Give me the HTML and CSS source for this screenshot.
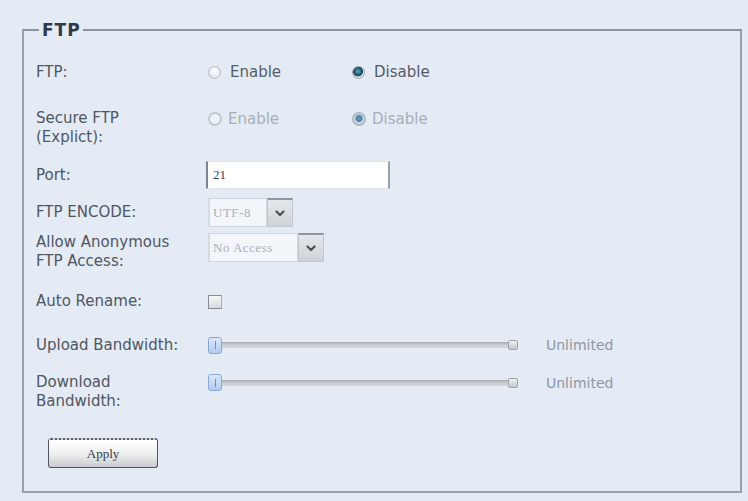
FILE: index.html
```html
<!DOCTYPE html>
<html lang="en">
<head>
<meta charset="utf-8">
<title>FTP</title>
<link rel="stylesheet" href="styles.css">
</head>
<body>
<fieldset class="panel">
  <legend class="panel-title">FTP</legend>

  <div class="row r1">
    <div class="label">FTP:</div>
    <div class="value">
      <label class="opt"><span class="radio"></span><span>Enable</span></label>
      <label class="opt"><span class="radio checked"></span><span>Disable</span></label>
    </div>
  </div>

  <div class="row r2 top">
    <div class="label">Secure FTP<br>(Explict):</div>
    <div class="value line">
      <label class="opt disabled"><span class="radio"></span><span>Enable</span></label>
      <label class="opt disabled"><span class="radio checked"></span><span>Disable</span></label>
    </div>
  </div>

  <div class="row r3">
    <div class="label">Port:</div>
    <div class="value"><input class="textbox" type="text" value="21"></div>
  </div>

  <div class="row r4">
    <div class="label">FTP ENCODE:</div>
    <div class="value">
      <div class="select">
        <span class="sel-text w-utf">UTF-8</span>
        <span class="sel-btn"><svg width="10" height="7" viewBox="0 0 10 7"><path d="M1.5 1.5 L5 5 L8.5 1.5" fill="none" stroke="#4a5158" stroke-width="2.2" stroke-linecap="round" stroke-linejoin="round"/></svg></span>
      </div>
    </div>
  </div>

  <div class="row r5 top">
    <div class="label">Allow Anonymous<br>FTP Access:</div>
    <div class="value">
      <div class="select">
        <span class="sel-text w-acc">No Access</span>
        <span class="sel-btn"><svg width="10" height="7" viewBox="0 0 10 7"><path d="M1.5 1.5 L5 5 L8.5 1.5" fill="none" stroke="#4a5158" stroke-width="2.2" stroke-linecap="round" stroke-linejoin="round"/></svg></span>
      </div>
    </div>
  </div>

  <div class="row r6">
    <div class="label">Auto Rename:</div>
    <div class="value"><span class="checkbox"></span></div>
  </div>

  <div class="row r7">
    <div class="label">Upload Bandwidth:</div>
    <div class="value">
      <div class="slider"><span class="thumb"></span><span class="track"></span><span class="cap"></span></div>
      <span class="limit">Unlimited</span>
    </div>
  </div>

  <div class="row r8 top">
    <div class="label">Download<br>Bandwidth:</div>
    <div class="value line">
      <div class="slider"><span class="thumb"></span><span class="track"></span><span class="cap"></span></div>
      <span class="limit">Unlimited</span>
    </div>
  </div>

  <div class="actions">
    <button class="btn" type="button">Apply</button>
  </div>
</fieldset>
</body>
</html>
```

FILE: styles.css
```css
html, body {
  margin: 0;
  padding: 0;
}
body {
  background: #e4ebf5;
  font-family: "DejaVu Sans", Verdana, sans-serif;
  font-size: 15px;
  color: #4e5761;
  padding: 21px 0 0 22px;
  width: 748px;
  height: 501px;
  box-sizing: border-box;
}
.panel {
  margin: 0;
  width: 720px;
  box-sizing: border-box;
  border: 2px solid #97a2ae;
  border-top-color: #8a95a1;
  padding: 19px 0 23px 12px;
  min-inline-size: 0;
}
.panel-title {
  margin-left: 3px;
  padding: 0 2px 0 3px;
  font-weight: bold;
  font-size: 17px;
  line-height: 18px;
  letter-spacing: 1px;
  color: #2c3a4a;
}
.row {
  display: flex;
  align-items: center;
}
.row.top { align-items: flex-start; }
.label {
  width: 172px;
  flex: none;
  line-height: 19px;
}
.value {
  display: flex;
  align-items: center;
}
.value.line { height: 19px; }
.r1 { height: 28px; }
.r2 { height: 39px; margin-top: 23px; }
.r3 { height: 28px; margin-top: 13px; }
.r4 { height: 29px; margin-top: 9px; }
.r5 { height: 39px; margin-top: 6px; }
.r6 { height: 20px; margin-top: 19px; }
.r7 { height: 20px; margin-top: 24px; }
.r8 { height: 39px; margin-top: 18px; }

.opt {
  display: flex;
  align-items: center;
  width: 144px;
  color: #545d67;
}
.opt.disabled { color: #a7afb8; }
.radio {
  width: 11px;
  height: 11px;
  border-radius: 50%;
  border: 1px solid #b3bbc3;
  background: radial-gradient(circle at 50% 40%, #ffffff 0%, #eef1f4 45%, #cfd5db 100%);
  margin-right: 9px;
  flex: none;
}
.radio.checked {
  border-color: #9aa4ae;
  background: radial-gradient(circle at 45% 40%, #6ea8bb 0%, #1f5d73 38%, #1a4c5e 52%, #dfe5ea 60%, #c4ccd3 100%);
}
.opt.disabled .radio {
  border: 2px solid #c0c8d0;
  width: 10px;
  height: 10px;
  background: #eef2f6;
  margin-right: 6px;
}
.opt.disabled .radio.checked {
  border-color: #aab7c4;
  background: radial-gradient(circle at 50% 45%, #6b97b5 0%, #4f7fa0 40%, #dfe7ef 58%, #c9d3dd 100%);
}

.textbox {
  width: 184px;
  height: 28px;
  box-sizing: border-box;
  margin: 0 0 0 -2px;
  padding: 0 0 0 5px;
  background: #ffffff;
  border: 1px solid #dfe4ea;
  border-left: 2px solid #7d848b;
  border-right: 2px solid #9aa1a8;
  font-family: "Liberation Serif", "Times New Roman", serif;
  font-size: 13px;
  color: #3f454b;
  outline: none;
}

.select {
  display: flex;
  height: 29px;
}
.sel-text {
  box-sizing: border-box;
  height: 29px;
  border: 1px solid #cfd6de;
  border-left: 2px solid #d5dbe2;
  background: #f2f5f9;
  font-family: "Liberation Serif", "Times New Roman", serif;
  font-size: 13px;
  color: #a9b0b8;
  padding-left: 3px;
  line-height: 27px;
  white-space: nowrap;
  overflow: hidden;
  letter-spacing: 0.5px;
}
.w-utf { width: 59px; }
.w-acc { width: 90px; }
.sel-btn {
  box-sizing: border-box;
  width: 26px;
  height: 29px;
  border: 1px solid #c2c8cf;
  border-top: 2px solid #8f969d;
  background: linear-gradient(#e4e7eb, #cfd3d8);
  display: flex;
  align-items: center;
  justify-content: center;
}

.checkbox {
  display: block;
  width: 14px;
  height: 14px;
  box-sizing: border-box;
  border: 1px solid #858c94;
  border-right-color: #a7adb3;
  background: linear-gradient(#f7f7f7, #d7dadd);
  margin-top: 1px;
}

.slider {
  display: flex;
  align-items: center;
  width: 310px;
  height: 17px;
}
.thumb {
  flex: none;
  width: 14px;
  height: 17px;
  box-sizing: border-box;
  border: 1px solid #84a9d8;
  border-radius: 3px;
  background: linear-gradient(#dbe8fa, #b2cbee);
  position: relative;
  z-index: 1;
  display: flex;
  justify-content: center;
  align-items: center;
}
.thumb::after {
  content: "";
  width: 1px;
  height: 8px;
  background: #6d8fb8;
}
.track {
  flex: 1;
  height: 6px;
  margin-left: -2px;
  background: linear-gradient(#a6aaad, #c6c9cb 40%, #d6d8d9);
  border-radius: 2px;
}
.cap {
  flex: none;
  width: 8px;
  height: 8px;
  border: 1px solid #9ea3a7;
  border-radius: 2px;
  background: linear-gradient(#eef0f1, #c5c8cb);
  margin-left: -1px;
}
.limit {
  margin-left: 28px;
  font-size: 14px;
  color: #8f98a1;
}

.actions {
  margin-top: 26px;
  padding-left: 12px;
}
.btn {
  width: 110px;
  height: 30px;
  border: 1px solid #4f555b;
  border-top: 2px dotted #5b6167;
  border-radius: 3px;
  background: linear-gradient(#ffffff, #eceded 55%, #c9cbce);
  font-family: "Liberation Serif", "Times New Roman", serif;
  font-size: 13px;
  color: #333a40;
  padding: 0;
}
```
